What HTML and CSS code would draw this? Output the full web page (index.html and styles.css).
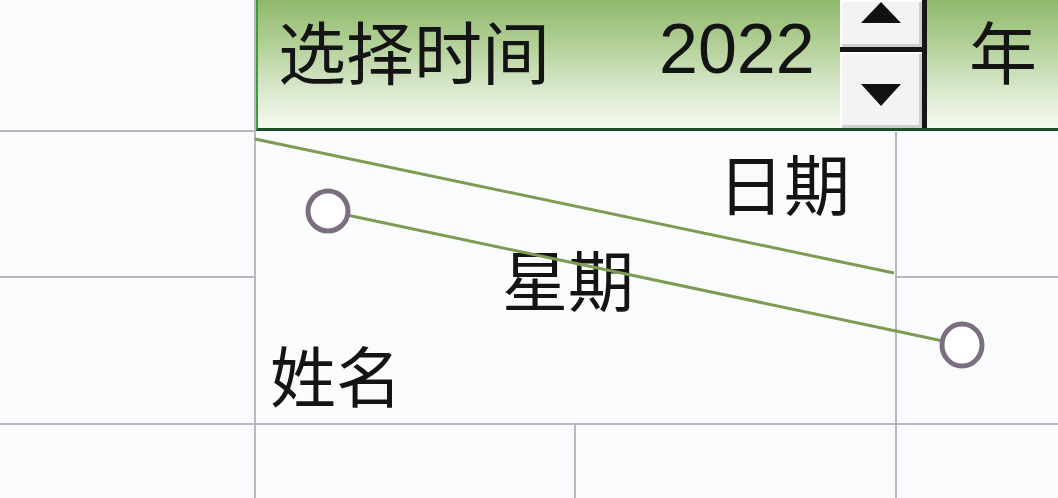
FILE: index.html
```html
<!doctype html>
<html>
  <head>
    <meta charset="utf-8">
    <title>选择时间</title>
    <link rel="stylesheet" href="styles.css">
  </head>
  <body>
    <div class="sheet">
      <div class="cell"></div>
      <div class="picker">
        <span class="picker-label">选择时间</span>
        <span class="picker-value" id="year">2022</span>
        <div class="spin">
          <button class="spin-btn up" id="yearUp">
            <svg width="40" height="21" viewBox="0 0 40 21"><path d="M0 21 L20 0 L40 21 Z"/></svg>
          </button>
          <button class="spin-btn down" id="yearDown">
            <svg width="40" height="22" viewBox="0 0 40 22"><path d="M0 0 L40 0 L20 22 Z"/></svg>
          </button>
        </div>
        <span class="picker-unit">年</span>
      </div>

      <div class="cell"></div>
      <div class="cell head">
        <div class="head-line col-date">日期</div>
        <div class="head-line col-week">星期</div>
        <div class="head-line col-name">姓名</div>
      </div>
      <div class="cell edge"></div>
      <div class="cell"></div>
      <div class="cell edge"></div>

      <div class="cell foot"></div>
      <div class="cell foot"></div>
      <div class="cell foot"></div>
      <div class="cell foot edge"></div>

      <!-- diagonal split of the header cell, plus the selected connector -->
      <svg class="shapes" width="1058" height="498" viewBox="0 0 1058 498">
        <line x1="255" y1="139" x2="894" y2="273" class="diag"/>
        <line x1="328" y1="211" x2="962" y2="345" class="diag"/>
        <circle cx="328" cy="211" r="20" class="handle"/>
        <ellipse cx="962" cy="345" rx="20" ry="21" class="handle"/>
      </svg>
    </div>
    <script>
      var year = document.getElementById('year');
      document.getElementById('yearUp').onclick = function() {
        year.textContent = +year.textContent + 1;
      };
      document.getElementById('yearDown').onclick = function() {
        year.textContent = +year.textContent - 1;
      };
    </script>
  </body>
</html>
```

FILE: styles.css
```css
html, body {
  margin: 0;
  padding: 0;
  background: #fafbfd;
}

* {
  box-sizing: border-box;
  font-family: 'Noto Sans CJK SC', 'Noto Sans', sans-serif;
  color: #141414;
}

.sheet {
  position: relative;
  width: 1058px;
  height: 498px;
  overflow: hidden;
  display: grid;
  grid-template-columns: 256px 320px 321px 1fr;
  grid-template-rows: 132px 146px 147px 1fr;
}

.cell {
  border-right: 2px solid #b8b7c1;
  border-bottom: 2px solid #b8b7c1;
}
.cell.edge {
  border-right: none;
}
.cell.foot {
  border-bottom: none;
}

/* year picker in the top row */
.picker {
  grid-column: 2 / 5;
  display: flex;
  align-items: flex-start;
  padding-left: 20px;
  border-left: 2px solid #3c9c3a;
  border-bottom: 3px solid #1f4f2b;
  margin-bottom: 1px;
  background: linear-gradient(180deg, #8fb96b 0%, #b3d098 35%, #d9e8cc 70%, #f5f9f0 100%);
}

.picker-label, .picker-unit {
  font-size: 68px;
  line-height: 99px;
}
.picker-label {
  width: 381px;
}
.picker-unit {
  margin-left: 42px;
}

.picker-value {
  width: 181px;
  font-family: 'Liberation Sans', sans-serif;
  font-size: 70px;
  line-height: 99px;
}

.spin {
  width: 87px;
  height: 128px;
  display: flex;
  flex-direction: column;
  border-right: 5px solid #161616;
  background: #161616;
}

.spin-btn {
  display: flex;
  justify-content: center;
  align-items: flex-start;
  margin: 0;
  padding: 0;
  border: none;
  background: #f3f3f2;
  box-shadow: inset 2px 2px 0 #ffffff, inset -3px -3px 0 #cfcfcf;
}
.spin-btn svg path {
  fill: #111;
}
.spin-btn.up {
  height: 47px;
  padding-top: 2px;
}
.spin-btn.down {
  height: 76px;
  margin-top: 5px;
  padding-top: 32px;
}

/* merged header cell with diagonal labels */
.head {
  grid-column: 2 / 4;
  grid-row: 2 / 4;
  padding-top: 1px;
}

.head-line {
  font-size: 66px;
  line-height: 96px;
  white-space: nowrap;
}
.col-date {
  padding-left: 462px;
}
.col-week {
  padding-left: 246px;
}
.col-name {
  padding-left: 14px;
}

.shapes {
  position: absolute;
  left: 0;
  top: 0;
  pointer-events: none;
}
.diag {
  stroke: #7d9b52;
  stroke-width: 3;
}
.handle {
  fill: #ffffff;
  stroke: #7b6e80;
  stroke-width: 5;
}
```
